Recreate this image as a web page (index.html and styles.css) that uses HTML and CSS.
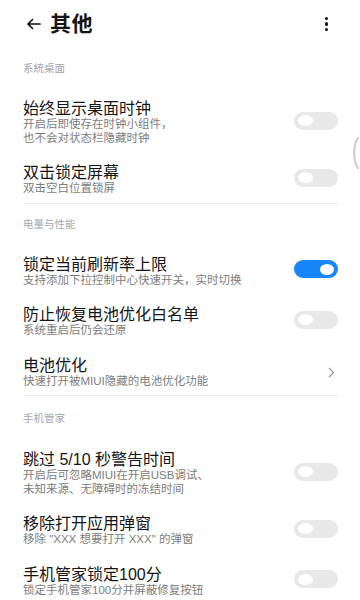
FILE: index.html
```html
<!DOCTYPE html>
<html lang="zh-CN">
<head>
<meta charset="utf-8">
<link rel="stylesheet" href="styles.css">
</head>
<body>
<div class="page">
  <header class="topbar">
    <svg class="back" width="15" height="12" viewBox="0 0 15 12"><path d="M14 6H2M6.5 1.5L2 6l4.5 4.5" fill="none" stroke="#111" stroke-width="1.7" stroke-linecap="round" stroke-linejoin="round"/></svg>
    <h1 class="title">其他</h1>
    <div class="more"><span></span><span></span><span></span></div>
  </header>

  <div class="label first">系統桌面</div>
  <div class="row">
    <div class="text"><div class="t">始终显示桌面时钟</div><div class="s">开启后即使存在时钟小组件，<br>也不会对状态栏隐藏时钟</div></div>
    <div class="toggle"><i></i></div>
  </div>
  <div class="row">
    <div class="text"><div class="t">双击锁定屏幕</div><div class="s">双击空白位置锁屏</div></div>
    <div class="toggle"><i></i></div>
  </div>
  <div class="divider"></div>

  <div class="label">电量与性能</div>
  <div class="row">
    <div class="text"><div class="t">锁定当前刷新率上限</div><div class="s">支持添加下拉控制中心快速开关，实时切换</div></div>
    <div class="toggle on"><i></i></div>
  </div>
  <div class="row">
    <div class="text"><div class="t">防止恢复电池优化白名单</div><div class="s">系统重启后仍会还原</div></div>
    <div class="toggle"><i></i></div>
  </div>
  <div class="row">
    <div class="text"><div class="t">电池优化</div><div class="s">快速打开被MIUI隐藏的电池优化功能</div></div>
    <svg class="chev" width="7" height="11" viewBox="0 0 7 11"><path d="M1 1l4.5 4.5L1 10" fill="none" stroke="#9a9a9a" stroke-width="1.2"/></svg>
  </div>
  <div class="divider"></div>

  <div class="label last">手机管家</div>
  <div class="row">
    <div class="text"><div class="t">跳过 5/10 秒警告时间</div><div class="s">开启后可忽略MIUI在开启USB调试、<br>未知来源、无障碍时的冻结时间</div></div>
    <div class="toggle"><i></i></div>
  </div>
  <div class="row">
    <div class="text"><div class="t">移除打开应用弹窗</div><div class="s">移除 "XXX 想要打开 XXX" 的弹窗</div></div>
    <div class="toggle"><i></i></div>
  </div>
  <div class="row">
    <div class="text"><div class="t">手机管家锁定100分</div><div class="s">锁定手机管家100分并屏蔽修复按钮</div></div>
    <div class="toggle"><i></i></div>
  </div>

  <svg class="edge" width="10" height="34" viewBox="0 0 10 34"><path d="M8 2C3 8 3 26 8 32" fill="none" stroke="#cfcfcf" stroke-width="2.2" stroke-linecap="round"/></svg>
</div>
</body>
</html>
```

FILE: styles.css
```css
* { box-sizing: border-box; margin: 0; padding: 0; }
html, body { background: #fff; }
body {
  font-family: "Liberation Sans", "Noto Sans CJK SC", sans-serif;
  color: #151515;
  width: 360px;
  height: 600px;
  overflow: hidden;
}
.page {
  position: relative;
  padding: 0 22px 0 23px;
}
.topbar {
  height: 48px;
  display: flex;
  align-items: center;
}
.back { margin-left: 3px; margin-right: 9px; }
.title {
  font-size: 21px;
  font-weight: 700;
  line-height: 28px;
  flex: 1;
  letter-spacing: 0.5px;
}
.more {
  display: flex;
  flex-direction: column;
  gap: 2px;
  margin-right: 10px;
}
.more span {
  width: 3.4px;
  height: 3.4px;
  background: #111;
  border-radius: 50%;
}
.label {
  font-size: 10.5px;
  line-height: 14px;
  color: #a3a6b0;
  padding: 13px 0 13px;
}
.label.last { padding: 15px 0 14px; }
.row {
  display: flex;
  align-items: center;
  padding: 10px 0 9px;
}
.text { flex: 1; padding-top: 2px; margin-bottom: -2px; }
.t {
  font-size: 16px;
  line-height: 18px;
  color: #151515;
}
.s {
  font-size: 11.5px;
  line-height: 13.5px;
  color: #7d7d7d;
}
.toggle {
  width: 44px;
  height: 18px;
  border-radius: 9px;
  background: #e8e8e8;
  display: flex;
  align-items: center;
  padding: 0 4px;
  flex: none;
}
.toggle i {
  display: block;
  width: 15px;
  height: 11px;
  border-radius: 50%;
  background: #fff;
}
.toggle.on { background: #1786f8; justify-content: flex-end; }
.toggle.on i { width: 14px; }
.chev { margin-right: 3px; margin-top: 4px; flex: none; }
.divider {
  height: 1px;
  background: #eeeeee;
}
.edge {
  position: absolute;
  right: 0;
  top: 136px;
}
```
